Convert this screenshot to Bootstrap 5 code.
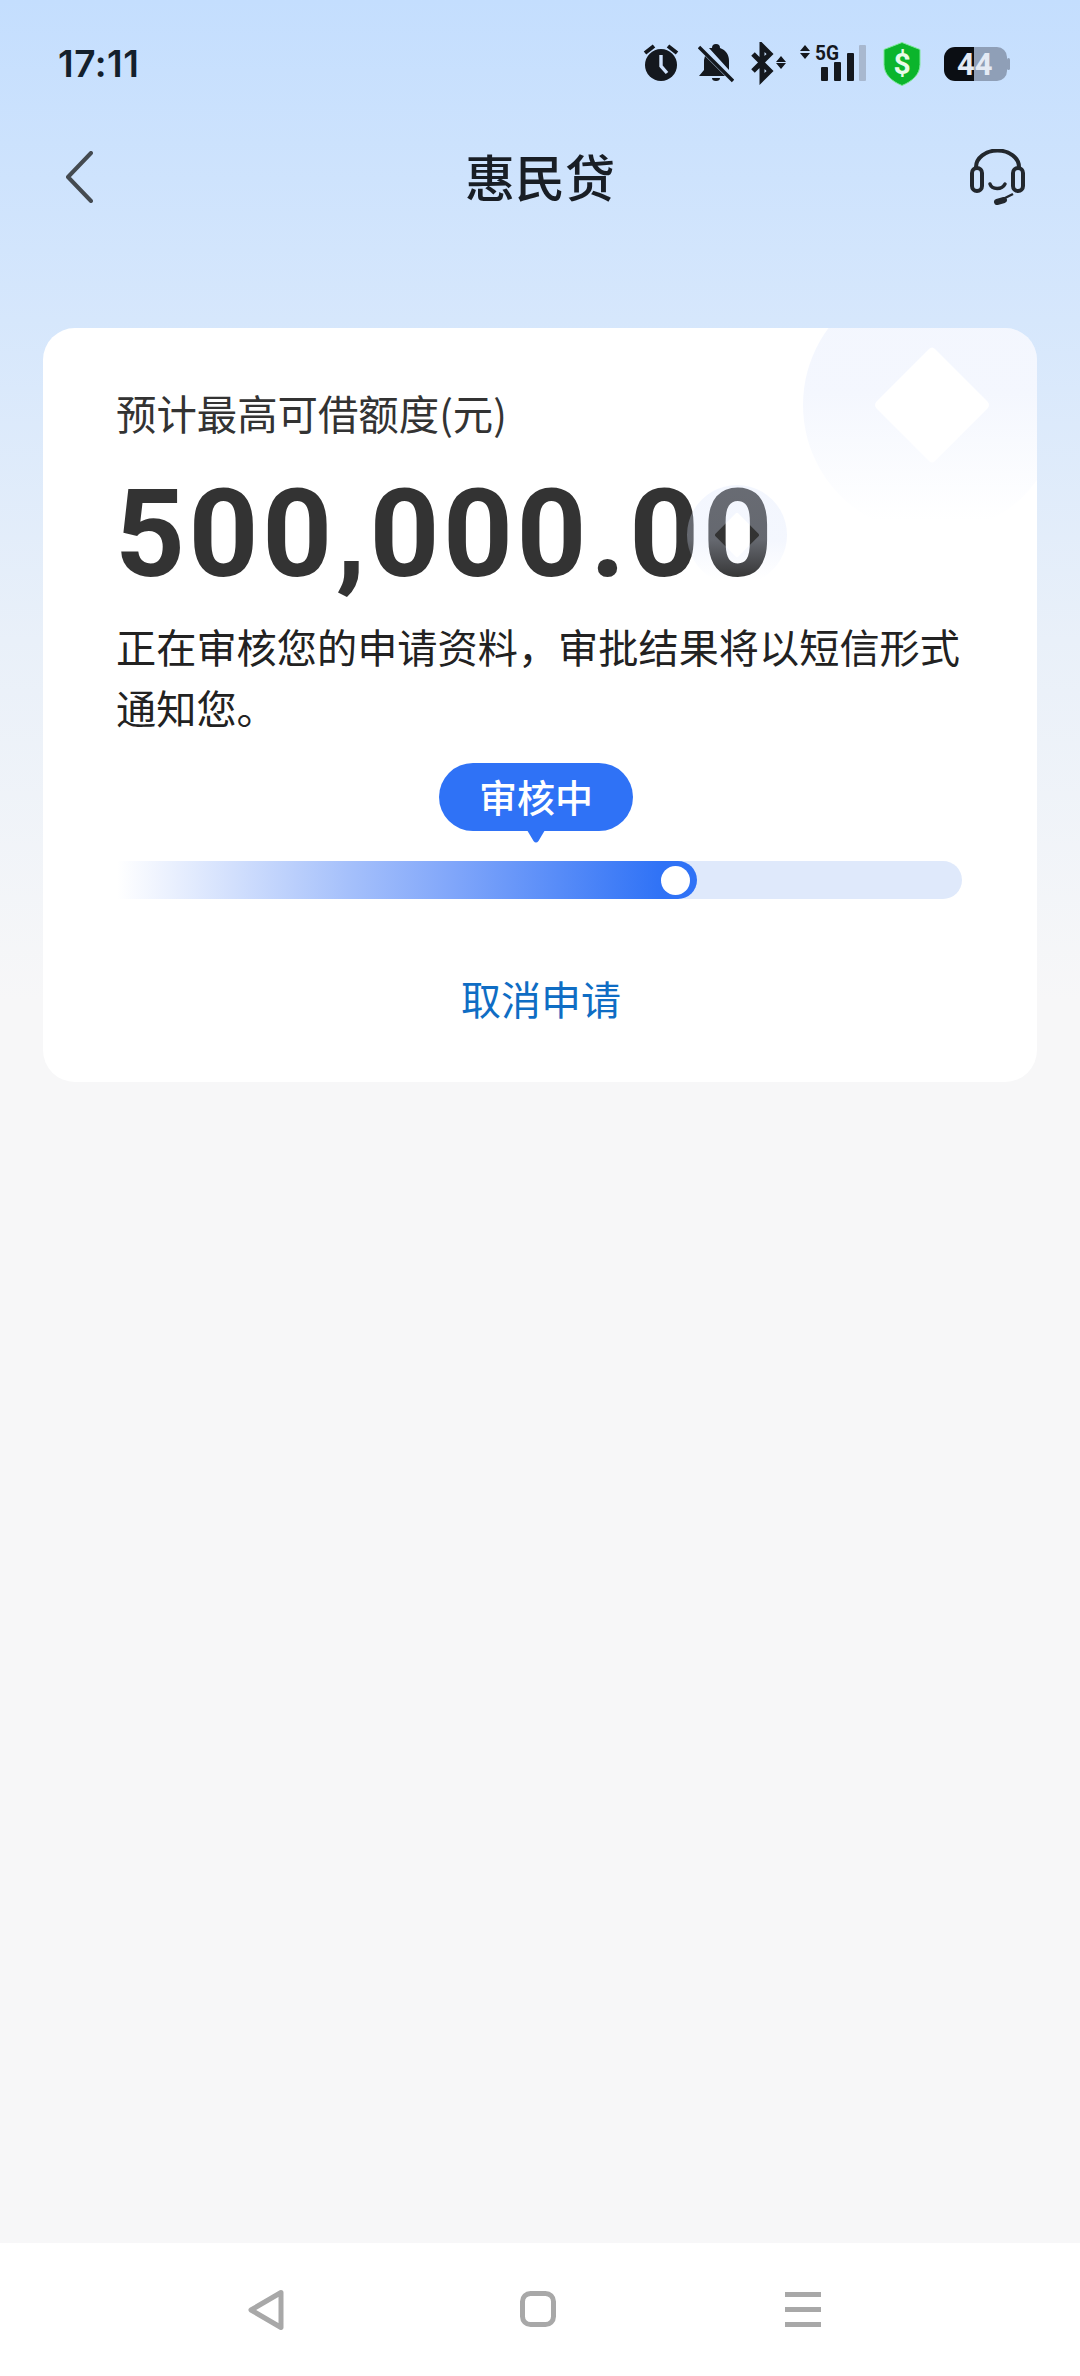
<!DOCTYPE html>
<html lang="zh-CN">
<head>
<meta charset="utf-8">
<title>惠民贷</title>
<link rel="stylesheet" href="https://cdn.jsdelivr.net/npm/bootstrap@5.3.0/dist/css/bootstrap.min.css">
<style>
html,body{height:2376px;overflow:hidden}
body{font-family:"Noto Sans CJK SC","Roboto",sans-serif;background:linear-gradient(180deg,#c4defe 0,#d6e7fc 320px,#e9f0f9 640px,#f7f7f8 1000px,#f7f7f8 100%);color:#222}
.status-row{height:88px;padding:0 70px 0 58px;align-items:flex-start}
.clock{font-family:"Inter",sans-serif;font-weight:600;font-size:37px;line-height:37px;margin-top:45px;color:#14202c;letter-spacing:.5px}
.status-icons{margin-top:42px;gap:0}
.status-icons svg{display:block;height:44px}
.gap-a{margin-right:19px}.gap-b{margin-right:17px}.gap-c{margin-right:14px}.gap-d{margin-right:16px}.gap-e{margin-right:23px}
.head-row{height:96px;padding:0 54px 0 65px;margin-top:41px;position:relative}
.head-title{font-size:50px;font-weight:500;line-height:60px;color:#191e25;position:absolute;left:465px;top:16px;white-space:nowrap}
.info-card{margin:103px 43px 0;height:754px;border-radius:32px;padding:0 75px 0 74px;background:#fff;overflow:hidden;position:relative}
.deco-big{position:absolute;left:760px;top:-52px;width:258px;height:258px}
.deco-small{position:absolute;left:572px;top:7px;width:100px;height:100px}
.limit-label{font-size:40.4px;line-height:50px;margin-top:60px;margin-left:-1px;color:#333}
.amount-wrap{position:relative;display:block;width:fit-content;margin-top:40px;margin-left:-2px;height:114px;white-space:nowrap}
.amount-num{display:block;font-family:"Roboto",sans-serif;font-weight:700;font-size:122px;line-height:114px;color:#333;letter-spacing:3.6px}
.desc-text{font-size:40.2px;line-height:61px;color:#222;margin:23px 0 0 -1px}
.bubble-wrap{margin-left:322px;width:194px;margin-top:26px;position:relative}
.state-bubble{height:68px;border-radius:34px;background:#2f72f6;color:#fff;font-size:38px;line-height:66px;text-align:center;font-weight:500}
.bubble-tail{display:block;position:absolute;left:87px;top:67px}
.track{height:38px;border-radius:19px;background:#dfe9fb;margin-top:30px;position:relative}
.track-fill{height:38px;border-radius:0 19px 19px 0;background:linear-gradient(90deg,#fff 0,#a5c0fb 40%,#80a6fa 58%,#2f72f6 94%);display:flex;align-items:center;justify-content:flex-end;padding-right:7px}
.track-knob{width:29px;height:29px;border-radius:50%;background:#fff;display:block}
.cancel-link{display:block;text-align:center;font-size:40px;line-height:50px;color:#0f6dc4;text-decoration:none;margin-top:74px;margin-left:3px}
.filler{flex:1 1 auto}
.nav-strip{height:133px;background:#fff;position:relative}
.nav-strip svg{display:block}
.nav-inner{padding:46px 259px 0 247px}
.home-key{margin-left:5px}
</style>
</head>
<body class="d-flex flex-column">
<div class="d-flex justify-content-between status-row">
  <div class="clock">17:11</div>
  <div class="d-flex status-icons">
    <svg class="gap-a" viewBox="644 42 36 44" width="36"><path d="M646 53l9-7M678 53l-9-7" stroke="#14181e" stroke-width="4" fill="none"/><circle cx="662" cy="65" r="16" fill="#14181e"/><path d="M662 55v11l6 7" stroke="#cfe2fc" stroke-width="3.4" fill="none"/></svg>
    <svg class="gap-b" viewBox="699 42 36 44" width="36"><path d="M713 48a4 4 0 0 1 8 0c6 2 9 7 9 13v9l-20-22zM706 56l20 20h-26l5-6V60z" fill="#14181e"/><path d="M713 78h8a4 3 0 0 1-8 0z" fill="#14181e"/><path d="M700 47l34 34" stroke="#14181e" stroke-width="3.4" fill="none"/></svg>
    <svg class="gap-c" viewBox="752 42 35 44" width="35"><path d="M754 54l17 17-8 8V46l8 8-17 17" stroke="#14181e" stroke-width="5" fill="none"/><path d="M782 56l5 6h-10zM782 69l5-6h-10z" fill="#14181e"/></svg>
    <svg class="gap-d" viewBox="801 42 67 44" width="67"><path d="M806 45l5 6h-10zM806 59l5-6h-10z" fill="#14181e"/><text x="816" y="60" font-family="Roboto,sans-serif" font-weight="700" font-size="21" textLength="24" lengthAdjust="spacingAndGlyphs" fill="#14181e">5G</text><rect x="822" y="67" width="7" height="14" rx="1" fill="#14181e"/><rect x="835" y="62" width="7" height="19" rx="1" fill="#14181e"/><rect x="848" y="53" width="7" height="28" rx="1" fill="#14181e"/><rect x="860" y="45" width="7" height="36" rx="1" fill="#a8b8cf"/></svg>
    <svg class="gap-e" viewBox="883 42 38 44" width="38"><path d="M902 42.500l18 7v15c0 10-8 17-18 21-10-4-18-11-18-21v-15z" fill="#0bb52c" stroke="#7ee89a" stroke-width="1"/><text x="902" y="74" text-anchor="middle" font-family="Roboto,sans-serif" font-weight="700" font-size="30" fill="#e9fbe9">$</text></svg>
    <svg viewBox="944 42 66 44" width="66"><path d="M955 47h19v34h-19a11 11 0 0 1-11-11V58a11 11 0 0 1 11-11z" fill="#0b0e13"/><path d="M974 47h23a10 10 0 0 1 10 10v14a10 10 0 0 1-10 10h-23z" fill="#8f9fb7"/><rect x="1007" y="58" width="3" height="12" rx="1.500" fill="#8f9fb7"/><text x="957" y="75" font-family="Roboto,sans-serif" font-weight="700" font-size="31" fill="#e4eaf4">44</text></svg>
  </div>
</div>
<div class="d-flex align-items-center justify-content-between head-row">
  <svg width="28" height="52" viewBox="0 0 28 52"><path d="M26 2L3 26l23 24" fill="none" stroke="#444a50" stroke-width="4" stroke-linecap="round" stroke-linejoin="round"/></svg>
  <div class="head-title">惠民贷</div>
  <svg width="56" height="56" viewBox="970 150 56 56"><path d="M976 170v-2a21.500 16.500 0 0 1 43 0v2" fill="none" stroke="#22272d" stroke-width="4"/><rect x="972" y="169" width="10" height="23" rx="5" fill="none" stroke="#22272d" stroke-width="4"/><rect x="1013" y="169" width="10" height="23" rx="5" fill="none" stroke="#22272d" stroke-width="4"/><path d="M990 185c2 6 12 6 15 0" fill="none" stroke="#22272d" stroke-width="3.500" stroke-linecap="round"/><path d="M1013 195l-10 5" fill="none" stroke="#22272d" stroke-width="2.500"/><path d="M997 203l7-2" fill="none" stroke="#22272d" stroke-width="6" stroke-linecap="round"/></svg>
</div>
<main class="info-card card border-0 d-block">
  <svg class="deco-big" viewBox="0 0 258 258"><defs><linearGradient id="fadeA" x1="0" y1="0" x2="0" y2="1"><stop offset="0" stop-color="#dae4fc" stop-opacity=".32"/><stop offset=".45" stop-color="#dae4fc" stop-opacity=".3"/><stop offset=".95" stop-color="#dae4fc" stop-opacity="0"/></linearGradient></defs><path fill="url(#fadeA)" fill-rule="evenodd" d="M129 0a129 129 0 1 0 .01 0zM126 73q3-3 6 0l52.500 52.500q3 3.500 0 7l-52.500 52.500q-3 3-6 0l-52.500-52.500q-3-3.500 0-7z"/></svg>
  <div class="limit-label">预计最高可借额度(元)</div>
  <div class="amount-wrap">
    <span class="amount-num">500,000.00</span>
    <svg class="deco-small" viewBox="0 0 258 258"><defs><linearGradient id="fadeB" x1="0" y1="0" x2="0" y2="1"><stop offset="0" stop-color="#dae4fc" stop-opacity=".32"/><stop offset=".55" stop-color="#dae4fc" stop-opacity=".3"/><stop offset=".95" stop-color="#dae4fc" stop-opacity="0"/></linearGradient></defs><path fill="url(#fadeB)" fill-rule="evenodd" d="M129 0a129 129 0 1 0 .01 0zM126 73q3-3 6 0l52.500 52.500q3 3.500 0 7l-52.500 52.500q-3 3-6 0l-52.500-52.500q-3-3.500 0-7z"/></svg>
  </div>
  <p class="desc-text">正在审核您的申请资料，审批结果将以短信形式通知您。</p>
  <div class="bubble-wrap">
    <div class="state-bubble">审核中</div>
    <svg class="bubble-tail" width="20" height="14" viewBox="0 0 20 14"><path d="M1 0h18l-6.500 11q-2.500 3-5 0z" fill="#2f72f6"/></svg>
  </div>
  <div class="track"><div class="track-fill" style="width:580px"><span class="track-knob"></span></div></div>
  <a class="cancel-link" href="#">取消申请</a>
</main>
<div class="filler"></div>
<nav class="nav-strip">
  <div class="d-flex justify-content-between nav-inner">
    <svg width="38" height="42" viewBox="0 0 38 42"><path d="M34 3.500L4 21l30 17.500z" fill="none" stroke="#a8a8a8" stroke-width="5" stroke-linejoin="round"/></svg>
    <svg class="home-key" width="36" height="40" viewBox="0 0 36 40"><rect x="2.500" y="4.500" width="31" height="31" rx="8" fill="none" stroke="#a8a8a8" stroke-width="5"/></svg>
    <svg width="36" height="40" viewBox="0 0 36 40"><path d="M0 5.500h36M0 20.500h36M0 35.500h36" stroke="#a8a8a8" stroke-width="5"/></svg>
  </div>
</nav>
<script src="https://cdn.jsdelivr.net/npm/bootstrap@5.3.0/dist/js/bootstrap.bundle.min.js"></script>
</body>
</html>
